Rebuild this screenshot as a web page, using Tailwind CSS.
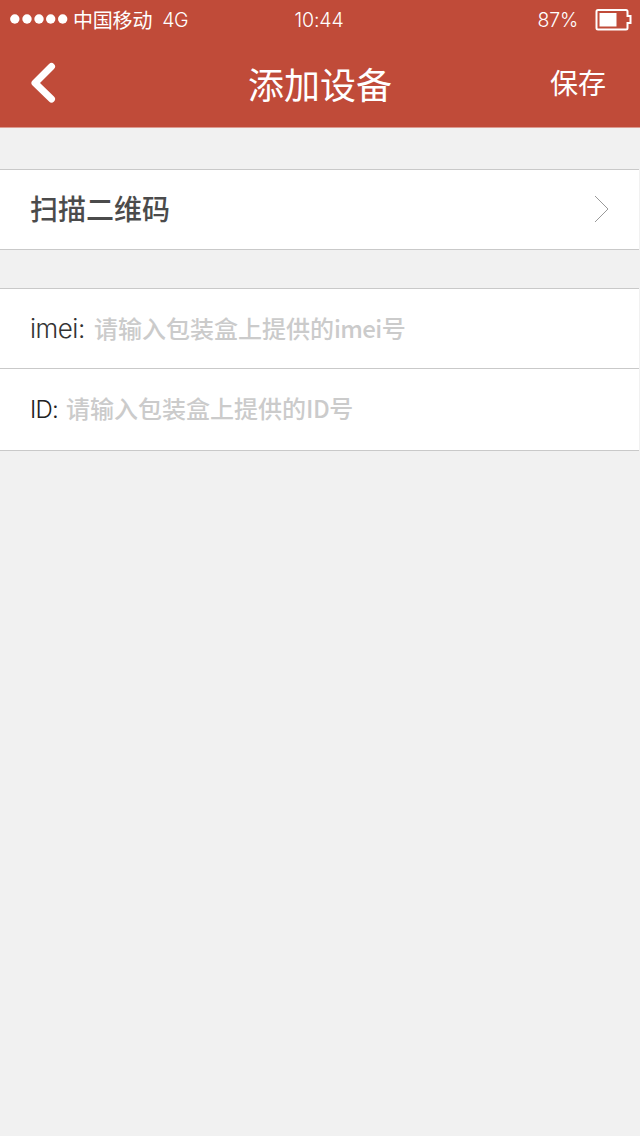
<!DOCTYPE html>
<html lang="zh-CN">
<head>
<meta charset="utf-8">
<title>添加设备</title>
<script src="https://cdn.jsdelivr.net/npm/@tailwindcss/browser@4"></script>
</head>
<body class="w-[640px] h-[1136px] overflow-hidden bg-[#f1f1f1] font-['Noto_Sans_CJK_SC',sans-serif] font-medium">
<header class="h-[127px] bg-[#c04b39] text-white flex flex-col shadow-[0_1px_0_#dc9b91]">
  <div class="h-10 grid grid-cols-[1fr_auto_1fr] items-center pl-[10px] pr-[7px] text-[20px] leading-10">
    <div class="flex items-center">
      <svg class="w-[58px] h-[10px] -mt-[2px]" viewBox="0 0 58 10" fill="#fff"><circle cx="4.8" cy="5" r="4.7"/><circle cx="17" cy="5" r="4.7"/><circle cx="29" cy="5" r="4.7"/><circle cx="40.7" cy="5" r="4.7"/><circle cx="52.7" cy="5" r="4.7"/></svg>
      <span class="ml-[5px] text-[20px] tracking-[-0.2px] font-normal">中国移动</span>
      <span class="ml-[10px] font-['Inter'] font-light text-[19.5px] tracking-[-0.5px]">4G</span>
    </div>
    <span class="-ml-[5px] font-['Inter'] font-light text-[19.5px] tracking-[-0.1px]">10:44</span>
    <div class="flex items-center justify-end">
      <span class="font-['Inter'] font-light text-[19.5px] tracking-[-0.2px]">87%</span>
      <svg class="ml-[17px] w-[38px] h-[22px]" viewBox="0 0 38 22" fill="none"><path d="M3 1h28q1.500 0 1.500 1.500v4.500h3v7h-3v5q0 1.500-1.500 1.500h-28q-1.500 0-1.500-1.500v-16.500q0-1.500 1.500-1.500z" stroke="#fff" stroke-width="2"/><path d="M4.500 4h17v13.500h-17z" fill="#fff"/></svg>
    </div>
  </div>
  <div class="h-[87px] grid grid-cols-[1fr_auto_1fr] items-center pl-[30px] pr-[34px]">
    <svg class="w-7 h-[42px] -mt-px" viewBox="0 0 28 42" fill="none"><path d="M21.500 4.500 5 21l16.500 16" stroke="#fff" stroke-width="7" stroke-linecap="round" stroke-linejoin="round"/></svg>
    <h1 class="ml-[4px] -mt-px text-[36px] leading-[86px] font-normal">添加设备</h1>
    <button class="justify-self-end text-[28px] leading-[84px] -mt-[3px] font-normal">保存</button>
  </div>
</header>
<main class="w-[639px] pt-[42px]">
  <a class="h-[81px] flex items-center justify-between border-y border-[#c9c9c9] bg-white pl-[30px] pr-[29px] text-[#4b4b4b]">
    <span class="text-[28px] -mt-[3px]">扫描二维码</span>
    <svg class="w-4 h-7 -mt-px" viewBox="0 0 16 28" fill="none"><path d="m1 1 13 13L1 27" stroke="#999"/></svg>
  </a>
  <form class="mt-[38px] border-y border-[#c9c9c9] bg-white">
    <div class="h-20 flex items-center pl-[30px] border-b border-[#c9c9c9]">
      <label class="w-[64px] font-['Inter'] font-light text-[26px] tracking-[-0.5px] text-[#333]">imei:</label>
      <span class="-mt-[2px] text-[24px] text-[#cbcbcb]">请输入包装盒上提供的<span class="tracking-[-0.6px]">imei</span>号</span>
    </div>
    <div class="h-[81px] flex items-center pl-[30px]">
      <label class="w-[36px] font-['Inter'] font-light text-[24px] tracking-[-0.8px] text-[#222]">ID:</label>
      <span class="-mt-[4px] text-[24px] text-[#cbcbcb]">请输入包装盒上提供的<span class="tracking-[-0.5px]">ID</span>号</span>
    </div>
  </form>
</main>
</body>
</html>
